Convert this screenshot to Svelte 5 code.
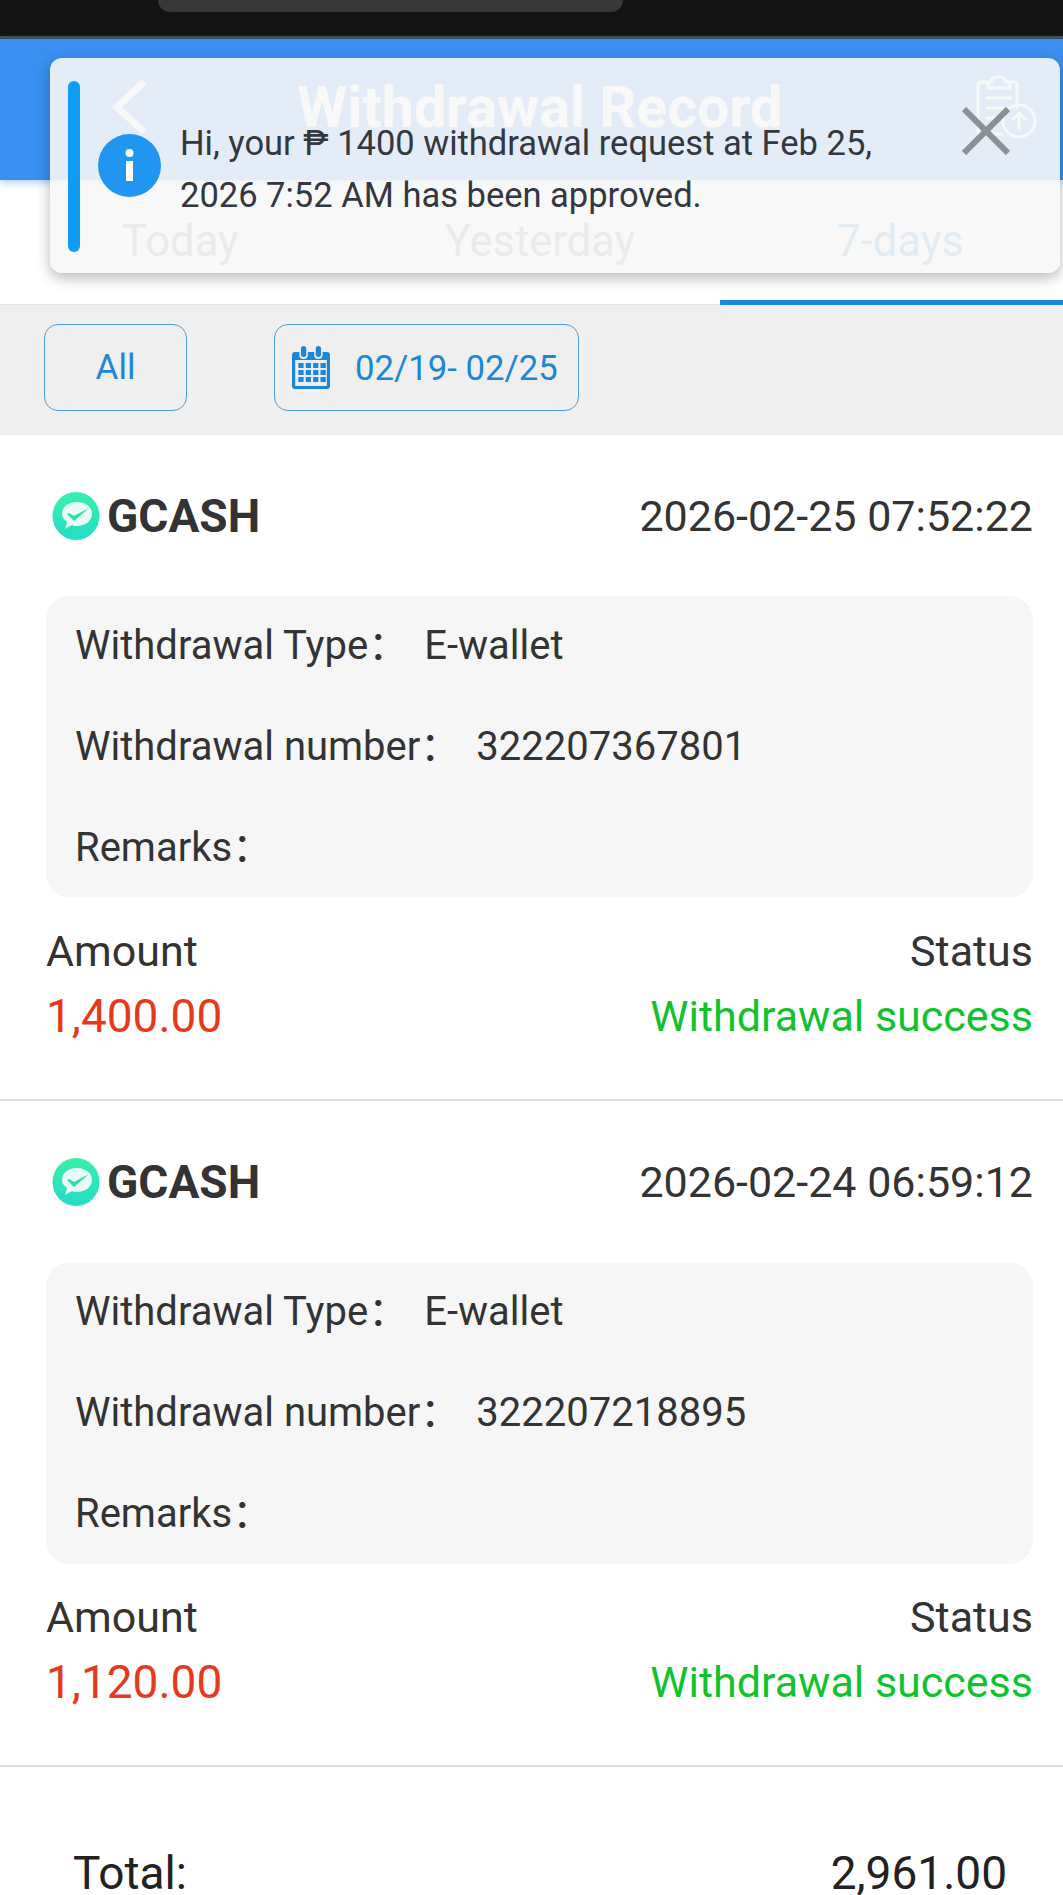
<script>
  const records = [
    { time: '2026-02-25 07:52:22', no: '322207367801', amount: '1,400.00' },
    { time: '2026-02-24 06:59:12', no: '322207218895', amount: '1,120.00' }
  ];
</script>

<div class="page">
  <div class="statusbar"><div class="notch"></div></div>
  <header class="topbar">
    <svg class="back" width="40" height="56" viewBox="0 0 40 56"><path d="M34 3 L7 28 L34 53" fill="none" stroke="#fff" stroke-width="7"/></svg>
    <h1>Withdrawal Record</h1>
    <svg class="clip" width="68" height="66" viewBox="0 0 68 66" fill="none" stroke="#fff" stroke-width="3">
      <path d="M14 8h8c1-7 14-7 15 0h8a3 3 0 0 1 3 3v24M34 60H12a3 3 0 0 1-3-3V11a3 3 0 0 1 3-3h4"/>
      <path d="M19 8v6h22V8M17 24h26M17 34h20M17 44h14"/>
      <circle cx="50" cy="47" r="16"/>
      <path d="M50 56V39M43 46l7-7 7 7"/>
    </svg>
  </header>
  <nav class="tabs">
    <div class="tab">Today</div>
    <div class="tab">Yesterday</div>
    <div class="tab active">7-days</div>
  </nav>
  <div class="filters">
    <div class="chip all">All</div>
    <div class="chip date">
      <svg width="38" height="44" viewBox="0 0 36 44" preserveAspectRatio="none">
        <path d="M3 6h4v3a4 4 0 0 0 8 0V6h6v3a4 4 0 0 0 8 0V6h4a3 3 0 0 1 3 3v31a3 3 0 0 1-3 3H3a3 3 0 0 1-3-3V9a3 3 0 0 1 3-3z" fill="#1c86d8"/>
        <rect x="3" y="14" width="30" height="26" fill="#e8eef4"/>
        <g fill="#1c86d8">
          {#each [17, 24, 31] as y}
            {#each [6, 13, 20, 27] as x}
              <rect {x} {y} width="5" height="5"/>
            {/each}
          {/each}
        </g>
        <rect x="8.500" y="0" width="5" height="11" rx="2.500" fill="#1c86d8"/>
        <rect x="22.500" y="0" width="5" height="11" rx="2.500" fill="#1c86d8"/>
      </svg>
      <span>02/19- 02/25</span>
    </div>
  </div>

  {#each records as r}
    <section class="record">
      <div class="head">
        <div class="brand">
          <svg width="48" height="48" viewBox="0 0 48 48">
            <defs>
              <linearGradient id="g" x1="0" y1="0" x2="0" y2="1">
                <stop offset="0" stop-color="#38f0a8"/>
                <stop offset="1" stop-color="#24dcc8"/>
              </linearGradient>
            </defs>
            <ellipse cx="24" cy="24" rx="23.500" ry="24" fill="url(#g)"/>
            <path d="M25 10c9 0 15 5 15 12s-7 12-15 12c-2 0-3 0-5-1l-7 4 2-7c-3-2-5-5-5-8 0-7 6-12 15-12z" fill="#e6fcf4"/>
            <path d="M15 22l2-1 5 3L37 16 22 29z" fill="#2fdcb0"/>
          </svg>
          <strong>GCASH</strong>
        </div>
        <time>{r.time}</time>
      </div>
      <div class="details">
        <div class="line"><span class="key">Withdrawal Type：</span><span>E-wallet</span></div>
        <div class="line"><span class="key">Withdrawal number：</span><span>{r.no}</span></div>
        <div class="line"><span class="key">Remarks：</span></div>
      </div>
      <div class="sum">
        <div class="col">
          <span>Amount</span>
          <span class="amount">{r.amount}</span>
        </div>
        <div class="col right">
          <span>Status</span>
          <span class="ok">Withdrawal success</span>
        </div>
      </div>
    </section>
  {/each}

  <div class="total"><span>Total:</span><span>2,961.00</span></div>

  <aside class="toast">
    <div class="bar"></div>
    <svg class="info" width="63" height="63" viewBox="0 0 63 63">
      <circle cx="31.500" cy="31.500" r="31.500" fill="#2196f0"/>
      <circle cx="31.500" cy="19" r="4" fill="#fff"/>
      <rect x="28" y="27" width="7" height="20" fill="#fff"/>
    </svg>
    <p>Hi, your ₱ 1400 withdrawal request at Feb 25, 2026 7:52 AM has been approved.</p>
    <svg class="close" width="48" height="48" viewBox="0 0 48 48"><path d="M2 2 L46 46 M46 2 L2 46" stroke="#8b8f96" stroke-width="6"/></svg>
  </aside>
</div>

<style>
  :global(body) { margin: 0; background: #fff; }
  .page {
    position: relative;
    width: 1063px;
    height: 1895px;
    overflow: hidden;
    font-family: Roboto, "Noto Sans CJK SC", "Liberation Sans", sans-serif;
    color: #333;
    background: #fff;
  }
  .statusbar {
    height: 36px;
    background: #141414;
    border-bottom: 3px solid #41474f;
    display: flex;
    justify-content: center;
    padding-right: 283px;
  }
  .notch {
    width: 465px;
    height: 12px;
    background: #37383a;
    border-radius: 0 0 32px 32px;
  }
  .topbar {
    height: 141px;
    background: #3a8ff0;
    box-shadow: 0 2px 8px rgba(58, 143, 240, 0.5);
    display: flex;
    align-items: center;
    justify-content: space-between;
    padding: 0 26px 6px 110px;
    box-sizing: border-box;
    position: relative;
    color: #fff;
  }
  .topbar h1 {
    position: absolute;
    left: 297px;
    top: 35px;
    margin: 0;
    font-size: 57.400px;
    line-height: 68px;
    font-weight: 700;
    white-space: nowrap;
  }
  .tabs {
    height: 125px;
    display: grid;
    grid-template-columns: repeat(3, 360px);
    background: #fff;
    border-bottom: 1px solid #e4e4e4;
    box-sizing: border-box;
  }
  .tab {
    text-align: center;
    font-size: 43.500px;
    line-height: 50px;
    padding-top: 37px;
    color: #777;
    position: relative;
  }
  .tab.active { color: #1c86d8; }
  .tab.active::after {
    content: "";
    position: absolute;
    left: 0;
    right: 0;
    bottom: -1px;
    height: 5px;
    background: #1c86d8;
  }
  .filters {
    height: 130px;
    background: #efefef;
    display: flex;
    gap: 87px;
    padding: 19px 0 0 44px;
    box-sizing: border-box;
    border-bottom: 1px solid #e9e9e9;
  }
  .chip {
    height: 87px;
    box-sizing: border-box;
    border: 1.500px solid #4d9dd8;
    border-radius: 14px;
    color: #1c86d8;
    font-size: 34.700px;
    display: flex;
    align-items: center;
    justify-content: center;
  }
  .all { width: 143px; font-size: 35px; }
  .date { width: 305px; gap: 25px; justify-content: flex-start; padding-left: 17px; }
  .record {
    height: 666px;
    box-sizing: border-box;
    border-bottom: 2px solid #dedede;
    padding: 0 30px 0 46px;
    background: #fff;
  }
  .head {
    height: 161px;
    display: flex;
    align-items: center;
    justify-content: space-between;
    color: #333;
  }
  .brand { display: flex; align-items: center; gap: 7px; padding-left: 6px; }
  .brand strong { font-size: 46px; font-weight: 700; color: #333; }
  .head time { font-size: 43px; color: #333; }
  .details {
    height: 302px;
    background: #f6f6f6;
    border-radius: 24px;
    box-sizing: border-box;
    padding: 0 29px;
    display: flex;
    flex-direction: column;
    font-size: 40px;
    line-height: 101px;
  }
  .line { display: flex; gap: 16px; height: 101px; color: #333; }
  .line:first-child { margin-top: -1px; }
  .sum {
    display: flex;
    justify-content: space-between;
    padding-top: 21px;
    font-size: 43px;
  }
  .col { display: flex; flex-direction: column; line-height: 65px; }
  .right { align-items: flex-end; }
  .amount { color: #e5391f; font-size: 46px; }
  .ok { color: #10c22e; }
  .total {
    display: flex;
    justify-content: space-between;
    padding: 81px 56px 0 73px;
    font-size: 46px;
    line-height: 50px;
    color: #222;
  }
  .toast {
    position: absolute;
    left: 50px;
    top: 58px;
    width: 1010px;
    height: 215px;
    box-sizing: border-box;
    background: rgba(247, 247, 247, 0.9);
    border-radius: 12px;
    box-shadow: 0 5px 14px rgba(0, 0, 0, 0.28);
  }
  .bar {
    position: absolute;
    left: 18px;
    top: 23px;
    width: 12px;
    height: 171px;
    border-radius: 6px;
    background: #0f9bf6;
  }
  .info { position: absolute; left: 48px; top: 76px; }
  .toast p {
    position: absolute;
    left: 130px;
    top: 59px;
    width: 750px;
    margin: 0;
    font-size: 34.500px;
    line-height: 52px;
    color: #33373f;
  }
  .close { position: absolute; left: 912px; top: 49px; }
</style>
